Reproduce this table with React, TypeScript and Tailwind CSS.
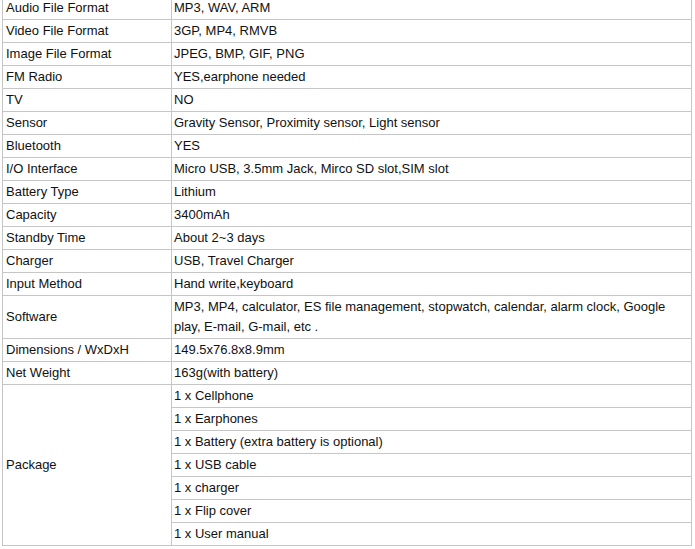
import React from "react";

const rows: [string, string][] = [
  ["Audio File Format", "MP3, WAV, ARM"],
  ["Video File Format", "3GP, MP4, RMVB"],
  ["Image File Format", "JPEG, BMP, GIF, PNG"],
  ["FM Radio", "YES,earphone needed"],
  ["TV", "NO"],
  ["Sensor", "Gravity Sensor, Proximity sensor, Light sensor"],
  ["Bluetooth", "YES"],
  ["I/O Interface", "Micro USB, 3.5mm Jack, Mirco SD slot,SIM slot"],
  ["Battery Type", "Lithium"],
  ["Capacity", "3400mAh"],
  ["Standby Time", "About 2~3 days"],
  ["Charger", "USB, Travel Charger"],
  ["Input Method", "Hand write,keyboard"],
];

const pkg = [
  "1 x Cellphone",
  "1 x Earphones",
  "1 x Battery (extra battery is optional)",
  "1 x USB cable",
  "1 x charger",
  "1 x Flip cover",
  "1 x User manual",
];

const td = "border border-[#c6c6c6] h-[23px] p-0 align-middle leading-[16px]";

export default function App() {
  return (
    <div
      className="w-[695px] h-[549px] overflow-hidden bg-white text-[#111]"
      style={{ fontFamily: '"Liberation Sans", Arial, sans-serif' }}
    >
      <table className="ml-[2px] -mt-[4px] border-collapse text-[13px] table-fixed w-[690px]">
        <colgroup>
          <col className="w-[169px]" />
          <col />
        </colgroup>
        <tbody>
          {rows.map(([k, v]) => (
            <tr key={k}>
              <td className={`${td} pl-[3px]`}>{k}</td>
              <td className={`${td} pl-[2px]`}>{v}</td>
            </tr>
          ))}
          <tr>
            <td className={`${td} pl-[3px]`}>Software</td>
            <td className={`${td} pl-[2px] pr-[4px] h-[43px] leading-[20px]`}>
              MP3, MP4, calculator, ES file management, stopwatch, calendar, alarm clock, Google play, E-mail, G-mail, etc .
            </td>
          </tr>
          <tr>
            <td className={`${td} pl-[3px]`}>Dimensions / WxDxH</td>
            <td className={`${td} pl-[2px]`}>149.5x76.8x8.9mm</td>
          </tr>
          <tr>
            <td className={`${td} pl-[3px]`}>Net Weight</td>
            <td className={`${td} pl-[2px]`}>163g(with battery)</td>
          </tr>
          {pkg.map((p, i) => (
            <tr key={p}>
              {i === 0 && (
                <td rowSpan={7} className={`${td} pl-[3px]`}>
                  Package
                </td>
              )}
              <td className={`${td} pl-[2px]`}>{p}</td>
            </tr>
          ))}
        </tbody>
      </table>
    </div>
  );
}
